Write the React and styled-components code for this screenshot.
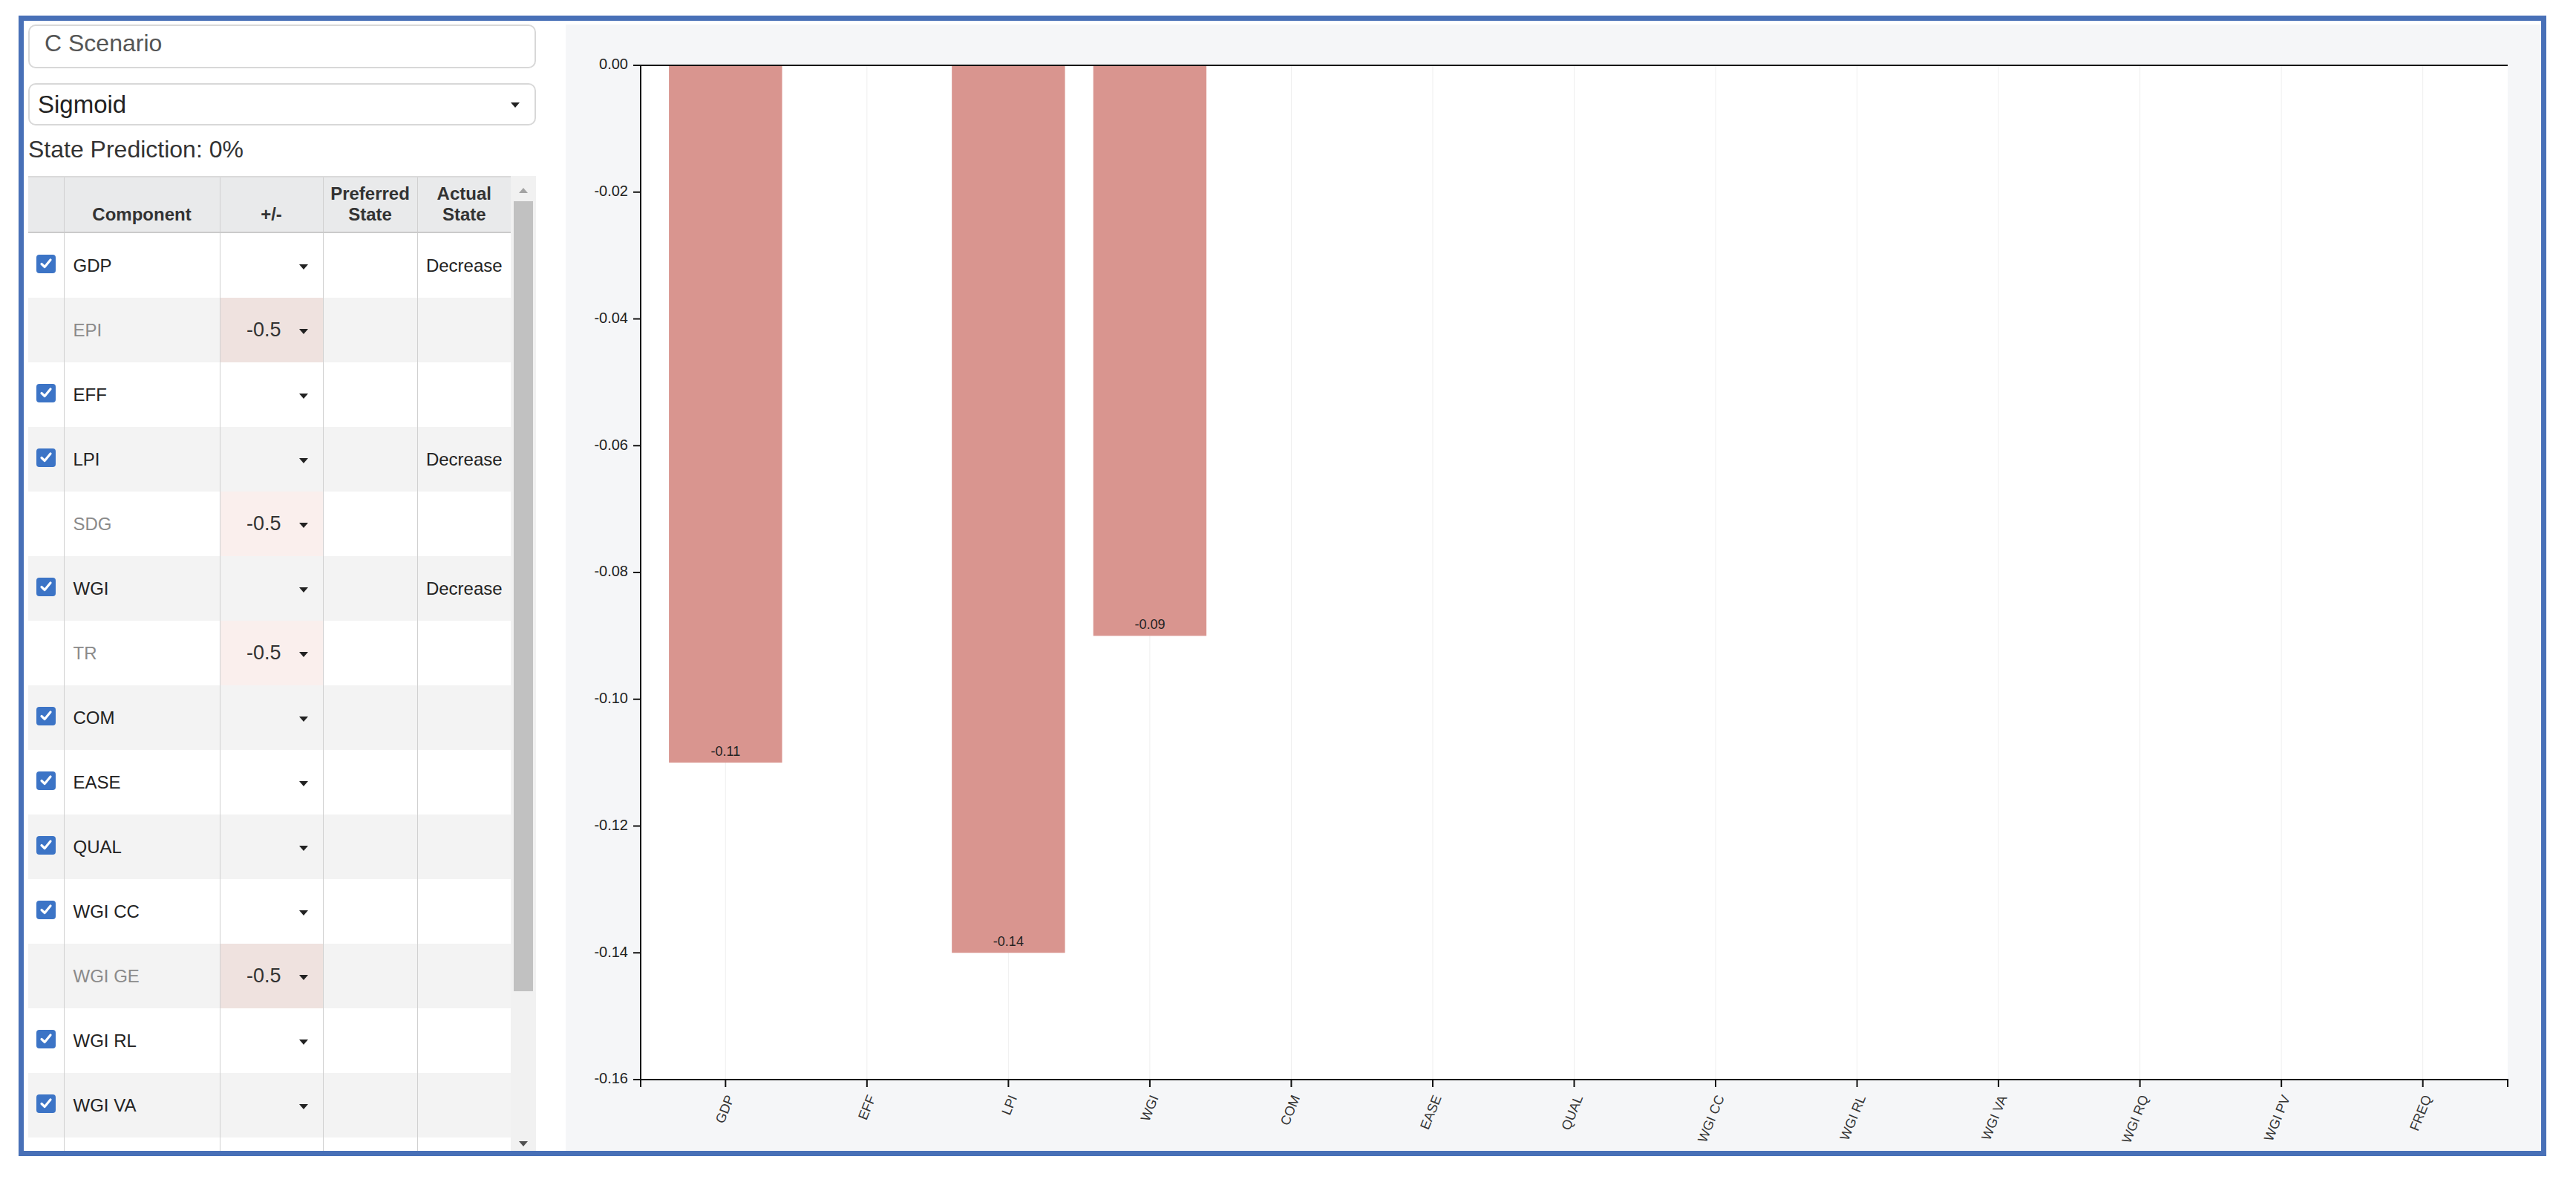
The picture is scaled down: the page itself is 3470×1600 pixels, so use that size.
import React from "react"
import styled, { createGlobalStyle } from "styled-components"

const GlobalStyle = createGlobalStyle`
html, body {
  margin: 0;
  padding: 0;
  background: #fff;
}
body {
  font-family: "Liberation Sans", Arial, sans-serif;
}
`

const Page = styled.div`
padding: 21px 0 0 25px;
`

const Frame = styled.div`
box-sizing: border-box;
width: 3405px;
height: 1536px;
border: 7px solid #4870b7;
display: flex;
background: #fff;
`

const SidePanel = styled.aside`
width: 690px;
box-sizing: border-box;
padding: 5px 0 0 6px;
display: flex;
flex-direction: column;
min-height: 0;
`

const TextField = styled.div`
box-sizing: border-box;
height: 59px;
border: 2px solid #d8d8d8;
border-radius: 10px;
padding: 0 0 8px 20px;
display: flex;
align-items: center;
font-size: 32px;
color: #555;
`

const SelectField = styled(TextField)`
margin-top: 20px;
height: 57px;
padding: 0 20px 0 11px;
justify-content: space-between;
font-size: 33px;
color: #222;
`

const Caret = styled.span`
width: 0;
height: 0;
border-left: 6px solid transparent;
border-right: 6px solid transparent;
border-top: 7px solid ${(p) => p.$color || "#222"};
margin-top: ${(p) => p.$drop || 0}px;
`

const Prediction = styled.div`
margin-top: 14px;
font-size: 32px;
line-height: 36px;
color: #333;
`

const TableBox = styled.div`
margin-top: 18px;
flex: 1;
display: flex;
min-height: 0;
`

const Viewport = styled.div`
width: 650px;
overflow: hidden;
`

const Grid = styled.table`
width: 650px;
border-collapse: collapse;
table-layout: fixed;
font-size: 24px;
`

const HeadCell = styled.th`
background: #e9eaeb;
border-top: 2px solid #dadada;
border-bottom: 2px solid #cacaca;
border-left: 1px solid #d0d0d0;
&:first-child { border-left: none; }
height: 64px;
padding: 0 4px 9px;
vertical-align: bottom;
font-weight: bold;
line-height: 28px;
color: #333;
text-align: center;
`

const Row = styled.tr`
background: ${(p) => (p.$stripe ? "#f3f3f3" : "#fff")};
`

const Cell = styled.td`
height: 87px;
padding: 0 0 0 12px;
border-left: 1px solid #d0d0d0;
vertical-align: middle;
color: ${(p) => (p.$muted ? "#8a8a8a" : "#222")};
background: ${(p) => p.$tint || "transparent"};
text-align: ${(p) => p.$align || "left"};
white-space: nowrap;
&:first-child { border-left: none; padding: 0; text-align: center; }
`

const Check = styled.span`
display: inline-flex;
width: 26px;
height: 25px;
border-radius: 4px;
background: #3c74c6;
align-items: center;
justify-content: center;
margin-bottom: 5px;
vertical-align: middle;
`

const Adjust = styled.div`
display: flex;
justify-content: flex-end;
align-items: center;
gap: 24px;
padding-right: 20px;
font-size: 27px;
color: #333;
`

const ScrollTrack = styled.div`
width: 34px;
background: #f1f1f1;
display: flex;
flex-direction: column;
align-items: center;
`

const ArrowUp = styled.span`
margin-top: 16px;
width: 0;
height: 0;
border-left: 6px solid transparent;
border-right: 6px solid transparent;
border-bottom: 7px solid #a3a3a3;
`

const ArrowDown = styled.span`
margin-top: auto;
margin-bottom: 6px;
width: 0;
height: 0;
border-left: 6px solid transparent;
border-right: 6px solid transparent;
border-top: 7px solid #505050;
`

const Thumb = styled.div`
margin-top: 11px;
width: 26px;
height: 1064px;
background: #c1c1c1;
`

const ChartPanel = styled.section`
flex: 1;
margin: 5px 0 0 40px;
background: #f5f6f8;
overflow: hidden;
`

const PlotBg = styled.rect`
fill: #fff;
`

const GridLine = styled.line`
stroke: #efefef;
stroke-width: 1;
`

const Bar = styled.rect`
fill: #d9958f;
`

const AxisPath = styled.path`
fill: none;
stroke: #111;
stroke-width: 2;
`

const AxisText = styled.text`
font-family: "Liberation Sans", Arial, sans-serif;
font-size: ${(p) => p.$size || 20}px;
fill: ${(p) => p.$color || "#222"};
`

const rows = [
  { name: "GDP", on: true, actual: "Decrease" },
  { name: "EPI", on: false, adj: "-0.5" },
  { name: "EFF", on: true },
  { name: "LPI", on: true, actual: "Decrease" },
  { name: "SDG", on: false, adj: "-0.5" },
  { name: "WGI", on: true, actual: "Decrease" },
  { name: "TR", on: false, adj: "-0.5" },
  { name: "COM", on: true },
  { name: "EASE", on: true },
  { name: "QUAL", on: true },
  { name: "WGI CC", on: true },
  { name: "WGI GE", on: false, adj: "-0.5" },
  { name: "WGI RL", on: true },
  { name: "WGI VA", on: true },
  { name: "WGI RQ", on: true },
  { name: "WGI PV", on: true },
  { name: "FREQ", on: true },
]

const categories = ["GDP", "EFF", "LPI", "WGI", "COM", "EASE", "QUAL", "WGI CC", "WGI RL", "WGI VA", "WGI RQ", "WGI PV", "FREQ"]
const values = { GDP: -0.11, LPI: -0.14, WGI: -0.09 }

// chart geometry (panel coords)
const W = 2661
const H = 1517
const left = 101
const right = 2616
const top = 55
const bottom = 1421
const step = (right - left) / (categories.length - 0.2 + 0.4)
const bandW = step * 0.8
const bandX = (i) => left + step * 0.2 + i * step
const yOf = (v) => top + (-v / 0.16) * (bottom - top)
const yTicks = [0, -0.02, -0.04, -0.06, -0.08, -0.1, -0.12, -0.14, -0.16]

const CheckMark = () => (
  <Check>
    <svg width="18" height="16" viewBox="0 0 18 16">
      <path d="M3 8.5 L7.2 12.5 L15 3" fill="none" stroke="#fff" strokeWidth="3.2" strokeLinecap="round" strokeLinejoin="round" />
    </svg>
  </Check>
)

const Chart = () => (
  <svg width={W} height={H}>
    <PlotBg x={left} y={top} width={right - left} height={bottom - top} />
    {categories.map((c, i) => {
      const cx = bandX(i) + bandW / 2
      return <GridLine key={c} x1={cx} x2={cx} y1={top} y2={bottom} />
    })}
    {categories.map((c, i) => {
      const v = values[c]
      if (v === undefined) return null
      const x = bandX(i)
      const y = yOf(v)
      return (
        <g key={c}>
          <Bar x={x} y={top} width={bandW} height={y - top} />
          <AxisText x={x + bandW / 2} y={y - 9} textAnchor="middle" $size={18}>
            {v.toFixed(2)}
          </AxisText>
        </g>
      )
    })}
    <AxisPath d={`M${left},${top}H${right}`} />
    <AxisPath d={`M${left - 10},${top}H${left}V${bottom}H${left - 10}`} />
    {yTicks.map((t) => (
      <g key={t}>
        <AxisPath d={`M${left - 10},${yOf(t)}H${left}`} />
        <AxisText x={left - 17} y={yOf(t)} textAnchor="end" dominantBaseline="middle">
          {t.toFixed(2)}
        </AxisText>
      </g>
    ))}
    <AxisPath d={`M${left},${bottom + 10}V${bottom}H${right}V${bottom + 10}`} />
    {categories.map((c, i) => {
      const cx = bandX(i) + bandW / 2
      return (
        <g key={c}>
          <AxisPath d={`M${cx},${bottom}V${bottom + 10}`} />
          <AxisText
            transform={`translate(${cx + 12},${bottom + 24}) rotate(-68)`}
            textAnchor="end"
            $size={18}
            $color="#333"
          >
            {c}
          </AxisText>
        </g>
      )
    })}
  </svg>
)

export default function App() {
  return (
    <Page>
      <GlobalStyle />
      <Frame>
        <SidePanel>
          <TextField>C Scenario</TextField>
          <SelectField>
            Sigmoid
            <Caret $drop={2} />
          </SelectField>
          <Prediction>State Prediction: 0%</Prediction>
          <TableBox>
            <Viewport>
              <Grid>
                <colgroup>
                  <col style={{ width: 48 }} />
                  <col style={{ width: 210 }} />
                  <col style={{ width: 139 }} />
                  <col style={{ width: 127 }} />
                  <col style={{ width: 126 }} />
                </colgroup>
                <thead>
                  <tr>
                    <HeadCell />
                    <HeadCell>Component</HeadCell>
                    <HeadCell>+/-</HeadCell>
                    <HeadCell>Preferred<br />State</HeadCell>
                    <HeadCell>Actual<br />State</HeadCell>
                  </tr>
                </thead>
                <tbody>
                  {rows.map((r, i) => {
                    const stripe = i % 2 === 1
                    const tint = r.adj ? (stripe ? "#efe2df" : "#faefed") : undefined
                    return (
                      <Row key={r.name} $stripe={stripe}>
                        <Cell>{r.on && <CheckMark />}</Cell>
                        <Cell $muted={!r.on}>{r.name}</Cell>
                        <Cell $tint={tint} style={{ padding: 0 }}>
                          <Adjust>
                            {r.adj && <span>{r.adj}</span>}
                            <Caret $drop={4} />
                          </Adjust>
                        </Cell>
                        <Cell />
                        <Cell $align="center" style={{ padding: 0 }}>{r.actual}</Cell>
                      </Row>
                    )
                  })}
                </tbody>
              </Grid>
            </Viewport>
            <ScrollTrack>
              <ArrowUp />
              <Thumb />
              <ArrowDown />
            </ScrollTrack>
          </TableBox>
        </SidePanel>
        <ChartPanel>
          <Chart />
        </ChartPanel>
      </Frame>
    </Page>
  )
}
